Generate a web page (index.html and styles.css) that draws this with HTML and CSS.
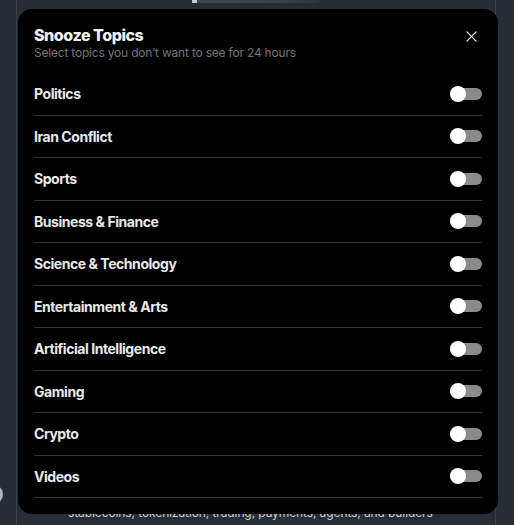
FILE: index.html
```html
<!DOCTYPE html>
<html lang="en">
<head>
<meta charset="utf-8">
<title>Snooze Topics</title>
<link rel="stylesheet" href="styles.css">
</head>
<body>
<div class="page">
  <div class="column">
    <div class="topbar"><span class="topbar-tip"></span></div>
    <p class="feed-text">stablecoins, tokenization, trading, payments, agents, and builders</p>
  </div>
  <span class="edge-dot"></span>
</div>

<div class="modal" role="dialog" aria-label="Snooze Topics">
  <div class="modal-header">
    <div class="titles">
      <h2 class="title">Snooze Topics</h2>
      <p class="subtitle">Select topics you don’t want to see for 24 hours</p>
    </div>
    <button class="close" aria-label="Close">
      <svg viewBox="0 0 12 12" width="11" height="11"><path d="M1 1L11 11M11 1L1 11" stroke="#e7e9ea" stroke-width="1.4" stroke-linecap="round"/></svg>
    </button>
  </div>
  <ul class="topics">
    <li class="topic"><span class="label">Politics</span><span class="toggle"><span class="knob"></span></span></li>
    <li class="topic"><span class="label">Iran Conflict</span><span class="toggle"><span class="knob"></span></span></li>
    <li class="topic"><span class="label">Sports</span><span class="toggle"><span class="knob"></span></span></li>
    <li class="topic"><span class="label">Business &amp; Finance</span><span class="toggle"><span class="knob"></span></span></li>
    <li class="topic"><span class="label">Science &amp; Technology</span><span class="toggle"><span class="knob"></span></span></li>
    <li class="topic"><span class="label">Entertainment &amp; Arts</span><span class="toggle"><span class="knob"></span></span></li>
    <li class="topic"><span class="label">Artificial Intelligence</span><span class="toggle"><span class="knob"></span></span></li>
    <li class="topic"><span class="label">Gaming</span><span class="toggle"><span class="knob"></span></span></li>
    <li class="topic"><span class="label">Crypto</span><span class="toggle"><span class="knob"></span></span></li>
    <li class="topic"><span class="label">Videos</span><span class="toggle"><span class="knob"></span></span></li>
  </ul>
</div>
</body>
</html>
```
FILE: styles.css
```css
* { box-sizing: border-box; }
html, body {
  margin: 0;
  padding: 0;
  height: 100%;
}
body {
  background: #262d34;
  font-family: Inter, "Noto Sans", sans-serif;
  overflow: hidden;
}
.page {
  position: relative;
  height: 525px;
}
.column {
  margin-left: 16px;
  width: 480px;
  height: 525px;
  border-left: 1px solid #38414a;
  border-right: 1px solid #38414a;
  display: flex;
  flex-direction: column;
  justify-content: space-between;
}
.topbar {
  margin-left: 175px;
  width: 128px;
  height: 3px;
  border-radius: 0 0 6px 6px;
  background: linear-gradient(90deg, #3d4750, #37414a 70%, #2c343c);
  position: relative;
}
.topbar-tip {
  position: absolute;
  left: 0;
  top: 0;
  width: 5px;
  height: 3px;
  background: #c8ccd0;
}
.feed-text {
  margin: 0 0 0 51px;
  font-size: 12px;
  line-height: 16px;
  color: #c9ced3;
  letter-spacing: -0.1px;
  padding-bottom: 4px;
}
.edge-dot {
  position: absolute;
  left: -18px;
  top: 484px;
  width: 21px;
  height: 21px;
  border-radius: 50%;
  background: #aeb4ba;
}
.modal {
  position: fixed;
  left: 18px;
  top: 9px;
  width: 480px;
  height: 505px;
  background: #000;
  border-radius: 14px;
  padding: 16px;
  color: #e7e9ea;
}
.modal-header {
  display: flex;
  justify-content: space-between;
  align-items: flex-start;
  height: 48px;
}
.title {
  margin: 0;
  font-size: 16px;
  line-height: 20px;
  font-weight: 800;
  letter-spacing: -0.45px;
  color: #f1f2f3;
}
.subtitle {
  margin: 0;
  font-size: 12px;
  line-height: 16px;
  letter-spacing: -0.2px;
  color: #71767b;
}
.close {
  width: 22px;
  height: 22px;
  padding: 0;
  margin: 0;
  border: 0;
  background: transparent;
  display: flex;
  align-items: center;
  justify-content: center;
}
.topics {
  list-style: none;
  margin: 0;
  padding: 0;
}
.topic {
  display: flex;
  align-items: center;
  justify-content: space-between;
  height: 42.5px;
  border-bottom: 1px solid #2f3336;
}
.label {
  font-size: 14px;
  font-weight: 700;
  color: #e7e9ea;
  letter-spacing: -0.45px;
}
.toggle {
  position: relative;
  width: 32px;
  height: 12px;
  border-radius: 6px;
  background: #8b8b8b;
}
.knob {
  position: absolute;
  left: 0;
  top: -2px;
  width: 16px;
  height: 16px;
  border-radius: 50%;
  background: #fff;
}
```
